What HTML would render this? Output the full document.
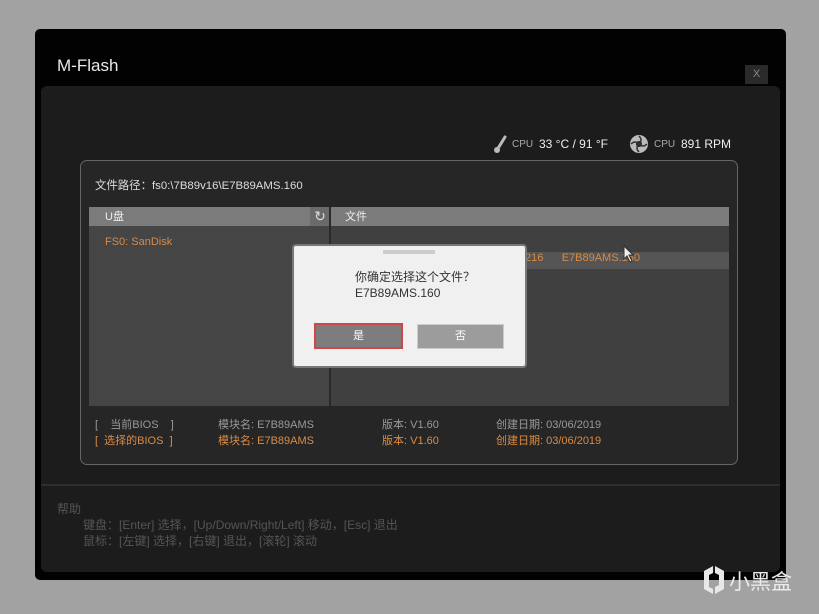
<!DOCTYPE html>
<html><head><meta charset="utf-8"><style>
body{margin:0;width:819px;height:614px;background:#a2a2a2;position:relative;overflow:hidden;font-family:"Liberation Sans","Noto Sans CJK SC",sans-serif}
div{position:absolute;box-sizing:border-box}
.t{white-space:nowrap;font-size:11px}
</style></head><body>
<div style="left:35px;top:29px;width:751px;height:551px;background:#020202;border-radius:5px"></div>
<div class="t" style="left:57px;top:56px;font-size:17px;color:#e8e8e8">M-Flash</div>
<div style="left:745px;top:65px;width:23px;height:19px;background:#2a2a2a;color:#888;font-size:11px;text-align:center;line-height:19px">X</div>
<div style="left:41px;top:86px;width:739px;height:486px;background:#1c1c1c;border-radius:6px"></div>
<div style="left:41px;top:484px;width:739px;height:2px;background:#2e2e2e"></div>
<svg style="position:absolute;left:493px;top:134px" width="16" height="20"><line x1="4" y1="16" x2="12" y2="3" stroke="#bbb" stroke-width="3" stroke-linecap="round"/><circle cx="4" cy="16" r="3" fill="#bbb"/></svg>
<div class="t" style="left:512px;top:139px;color:#aaa;font-size:10px">CPU</div>
<div class="t" style="left:539px;top:137px;color:#eee;font-size:12px">33 °C / 91 °F</div>
<svg style="position:absolute;left:629px;top:134px" width="20" height="20"><circle cx="10" cy="10" r="9" fill="#bbb"/><circle cx="10" cy="10" r="3" fill="#222"/><path d="M10 2Q14 6 10 10M18 10Q14 14 10 10M10 18Q6 14 10 10M2 10Q6 6 10 10" stroke="#333" fill="none" stroke-width="1.5"/></svg>
<div class="t" style="left:654px;top:139px;color:#aaa;font-size:10px">CPU</div>
<div class="t" style="left:681px;top:137px;color:#eee;font-size:12px">891 RPM</div>
<div style="left:80px;top:160px;width:658px;height:305px;background:#262626;border:1px solid #666;border-radius:7px"></div>
<div class="t" style="left:95px;top:177px;color:#ddd;font-size:11.4px">文件路径：fs0:\7B89v16\E7B89AMS.160</div>
<div style="left:89px;top:207px;width:240px;height:199px;background:#454545"></div>
<div style="left:331px;top:207px;width:398px;height:199px;background:#404040"></div>
<div style="left:89px;top:207px;width:640px;height:19px;background:#7b7b7b"></div>
<div style="left:310px;top:207px;width:20px;height:19px;background:#6a6a6a;color:#ddd;font-size:14px;text-align:center;line-height:19px">↻</div>
<div style="left:329px;top:207px;width:2px;height:199px;background:#2a2a2a"></div>
<div class="t" style="left:105px;top:208px;color:#eee">U盘</div>
<div class="t" style="left:345px;top:208px;color:#eee">文件</div>
<div class="t" style="left:105px;top:236px;color:#d98b45">FS0: SanDisk</div>
<div style="left:331px;top:252px;width:398px;height:17px;background:#555"></div>
<div class="t" style="left:525px;top:252px;color:#d98b45">216&nbsp;&nbsp;&nbsp;&nbsp;&nbsp;&nbsp;E7B89AMS.160</div>
<div class="t" style="left:95px;top:416px;color:#999">[&nbsp;&nbsp;&nbsp;&nbsp;当前BIOS&nbsp;&nbsp;&nbsp;&nbsp;]</div>
<div class="t" style="left:218px;top:416px;color:#999">模块名: E7B89AMS</div>
<div class="t" style="left:382px;top:416px;color:#999">版本: V1.60</div>
<div class="t" style="left:496px;top:416px;color:#999">创建日期: 03/06/2019</div>
<div class="t" style="left:95px;top:432px;color:#d98b45">[&nbsp;&nbsp;选择的BIOS&nbsp;&nbsp;]</div>
<div class="t" style="left:218px;top:432px;color:#d98b45">模块名: E7B89AMS</div>
<div class="t" style="left:382px;top:432px;color:#d98b45">版本: V1.60</div>
<div class="t" style="left:496px;top:432px;color:#d98b45">创建日期: 03/06/2019</div>
<div style="left:292px;top:244px;width:235px;height:124px;background:#f0f0f0;border:2px solid #777;border-radius:4px"></div>
<div style="left:383px;top:250px;width:52px;height:4px;background:#ccc"></div>
<div class="t" style="left:355px;top:268px;color:#333;font-size:12px">你确定选择这个文件？</div>
<div class="t" style="left:355px;top:286px;color:#333;font-size:12px">E7B89AMS.160</div>
<div style="left:314px;top:323px;width:89px;height:26px;background:#7d7d7d;border:2px solid #d04545;color:#fff;font-size:11px;text-align:center;line-height:22px">是</div>
<div style="left:417px;top:324px;width:87px;height:25px;background:#9c9c9c;border:1px solid #ccc;color:#fff;font-size:11px;text-align:center;line-height:23px">否</div>
<svg style="position:absolute;left:623px;top:245px" width="12" height="18"><path d="M1 1L1 14L4 11L7 17L9 16L6 10L10 10Z" fill="#eee" stroke="#333"/></svg>
<div class="t" style="left:57px;top:500px;color:#555;font-size:12px">帮助</div>
<div class="t" style="left:83px;top:516px;color:#555;font-size:12px">键盘：[Enter] 选择，[Up/Down/Right/Left] 移动，[Esc] 退出</div>
<div class="t" style="left:83px;top:532px;color:#555;font-size:12px">鼠标：[左键] 选择，[右键] 退出，[滚轮] 滚动</div>
<svg style="position:absolute;left:701px;top:565px" width="26" height="30"><path d="M3 6L12 1L12 8L8 10L8 22L12 24L12 29L3 24Z M14 1L23 6L23 24L14 29L14 22L18 20L18 10L14 8Z" fill="#e8e8e8"/></svg>
<div class="t" style="left:729px;top:566px;color:#eaeaea;font-size:21px">小黑盒</div>
</body></html>
